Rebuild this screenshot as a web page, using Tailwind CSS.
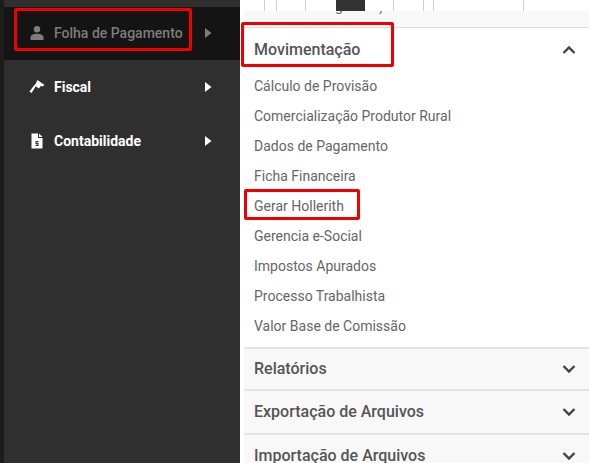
<!DOCTYPE html>
<html lang="en">
<head>
    <meta charset="UTF-8">
    <meta name="viewport" content="width=device-width, initial-scale=1.0">
    <title>Folha de Pagamento</title>
    <script src="https://cdn.jsdelivr.net/npm/@tailwindcss/browser@4"></script>
</head>
<body class="h-[463px] w-[589px] overflow-hidden bg-[#2f2f2f] font-['Roboto',sans-serif]">
    <div class="relative flex h-[463px] w-[589px] overflow-hidden">
        <!-- Sidebar -->
        <aside class="h-full w-[240px] shrink-0 border-l-4 border-[#1c1c1c] bg-[#2f2f2f] pt-[7px]">
            <div class="flex h-[53px] items-center bg-[#141414] pb-[1px] pl-[25px] text-[#7d7d7d]">
                <svg class="h-4 w-4" viewBox="0 0 16 16" fill="currentColor"><circle cx="8" cy="4.200" r="3.200"/><path d="M1.500 15v-2.500c0-2.400 2.600-3.800 6.500-3.800s6.500 1.400 6.500 3.800V15z"/></svg>
                <span class="ml-[9px] w-[151px] text-[14px] font-medium whitespace-nowrap">Folha de Pagamento</span>
                <svg class="h-[10px] w-[7px]" viewBox="0 0 7 10" fill="currentColor"><path d="M0 0l6.500 5L0 10z"/></svg>
            </div>
            <div class="flex h-[54px] items-center pl-[25px] text-white">
                <svg class="h-4 w-4" viewBox="0 0 16 16" fill="currentColor"><path d="M8.500 1l7 5-2 1.500-1.500-.7-2.200 2.600-3-2.200L2.500 14 .5 12.500 5 6.500 6.500 5z"/></svg>
                <span class="ml-[9px] w-[151px] text-[14px] font-bold">Fiscal</span>
                <svg class="h-[10px] w-[7px]" viewBox="0 0 7 10" fill="currentColor"><path d="M0 0l6.500 5L0 10z"/></svg>
            </div>
            <div class="flex h-[54px] items-center pl-[25px] text-white">
                <svg class="h-4 w-4" viewBox="0 0 16 16" fill="currentColor"><path fill-rule="evenodd" d="M2.500.5H9V5h4.500v10.500h-11zM10 .5L13.500 4H10zM6.500 8h3v1.300h-2v.7h2v3h-3v-1.300h2v-.7h-2z"/></svg>
                <span class="ml-[9px] w-[151px] text-[14px] font-bold">Contabilidade</span>
                <svg class="h-[10px] w-[7px]" viewBox="0 0 7 10" fill="currentColor"><path d="M0 0l6.500 5L0 10z"/></svg>
            </div>
        </aside>

        <div class="flex h-full flex-1 flex-col bg-white">
            <!-- Page behind the menu -->
            <div class="flex h-[11px] shrink-0">
                <div class="w-[25px] border-r border-[#cfcfcf]"></div>
                <div class="w-[12px] border-r border-[#cfcfcf]"></div>
                <div class="w-[29px] border-r border-[#cfcfcf]"></div>
                <div class="w-[30px]"></div>
                <div class="w-[29px] bg-[#333]"></div>
                <div class="w-[29px] border-r border-[#cfcfcf]"></div>
                <div class="w-[30px] border-r border-[#cfcfcf]"></div>
                <div class="w-[10px] border-r border-[#cfcfcf]"></div>
                <div class="w-[90px] border-r border-[#cfcfcf]"></div>
            </div>
            <!-- Menu panel -->
            <div class="flex-1 rounded-tl-[3px] bg-white pl-[4px]">
                <div class="flex h-[17px] overflow-hidden border-b border-[#dedede] bg-[#f7f8fa] text-[14px] leading-[4px] text-[#666]">
                    <span class="ml-[91px] -translate-y-[7px]">g</span>
                    <span class="ml-[36px] -translate-y-[7px]">)</span>
                </div>
                <div class="flex h-[43px] items-center justify-between pr-[13px] pl-[10px]">
                    <span class="text-[16px] font-medium text-[#555]">Movimentação</span>
                    <svg class="h-[10px] w-[14px] text-[#444]" viewBox="0 0 14 10" fill="none" stroke="currentColor" stroke-width="2.400"><path d="M1.500 8L7 2.500 12.500 8"/></svg>
                </div>
                <ul class="pb-[6px] text-[14px] text-[#666]">
                    <li class="flex h-[30px] items-center pl-[10px]">Cálculo de Provisão</li>
                    <li class="flex h-[30px] items-center pl-[10px]">Comercialização Produtor Rural</li>
                    <li class="flex h-[30px] items-center pl-[10px]">Dados de Pagamento</li>
                    <li class="flex h-[30px] items-center pl-[10px]">Ficha Financeira</li>
                    <li class="flex h-[30px] items-center pl-[10px]">Gerar Hollerith</li>
                    <li class="flex h-[30px] items-center pl-[10px]">Gerencia e-Social</li>
                    <li class="flex h-[30px] items-center pl-[10px]">Impostos Apurados</li>
                    <li class="flex h-[30px] items-center pl-[10px]">Processo Trabalhista</li>
                    <li class="flex h-[30px] items-center pl-[10px]">Valor Base de Comissão</li>
                </ul>
                <div class="flex h-[42px] items-center justify-between border-t-2 border-[#e4e4e4] bg-[#f8f8f8] pr-[13px] pl-[10px]">
                    <span class="text-[16px] font-medium text-[#555]">Relatórios</span>
                    <svg class="h-[10px] w-[14px] text-[#444]" viewBox="0 0 14 10" fill="none" stroke="currentColor" stroke-width="2.400"><path d="M1.500 2L7 7.500 12.500 2"/></svg>
                </div>
                <div class="flex h-[44px] items-center justify-between border-t-2 border-[#e4e4e4] bg-[#f8f8f8] pr-[13px] pl-[10px]">
                    <span class="text-[16px] font-medium text-[#555]">Exportação de Arquivos</span>
                    <svg class="h-[10px] w-[14px] text-[#444]" viewBox="0 0 14 10" fill="none" stroke="currentColor" stroke-width="2.400"><path d="M1.500 2L7 7.500 12.500 2"/></svg>
                </div>
                <div class="flex h-[44px] items-center justify-between border-t-2 border-[#e4e4e4] bg-[#f8f8f8] pr-[13px] pl-[10px]">
                    <span class="text-[16px] font-medium text-[#555]">Importação de Arquivos</span>
                    <svg class="h-[10px] w-[14px] text-[#444]" viewBox="0 0 14 10" fill="none" stroke="currentColor" stroke-width="2.400"><path d="M1.500 2L7 7.500 12.500 2"/></svg>
                </div>
            </div>
        </div>

        <!-- Red highlight boxes drawn over the screenshot -->
        <div class="absolute top-[8px] left-[14px] h-[43px] w-[178px] rounded-[2px] border-[3px] border-[#f00000]"></div>
        <div class="absolute top-[22px] left-[241px] h-[45px] w-[153px] rounded-[2px] border-[3px] border-[#f00000]"></div>
        <div class="absolute top-[189px] left-[244px] h-[31px] w-[116px] rounded-[2px] border-[3px] border-[#f00000]"></div>
    </div>
</body>
</html>
